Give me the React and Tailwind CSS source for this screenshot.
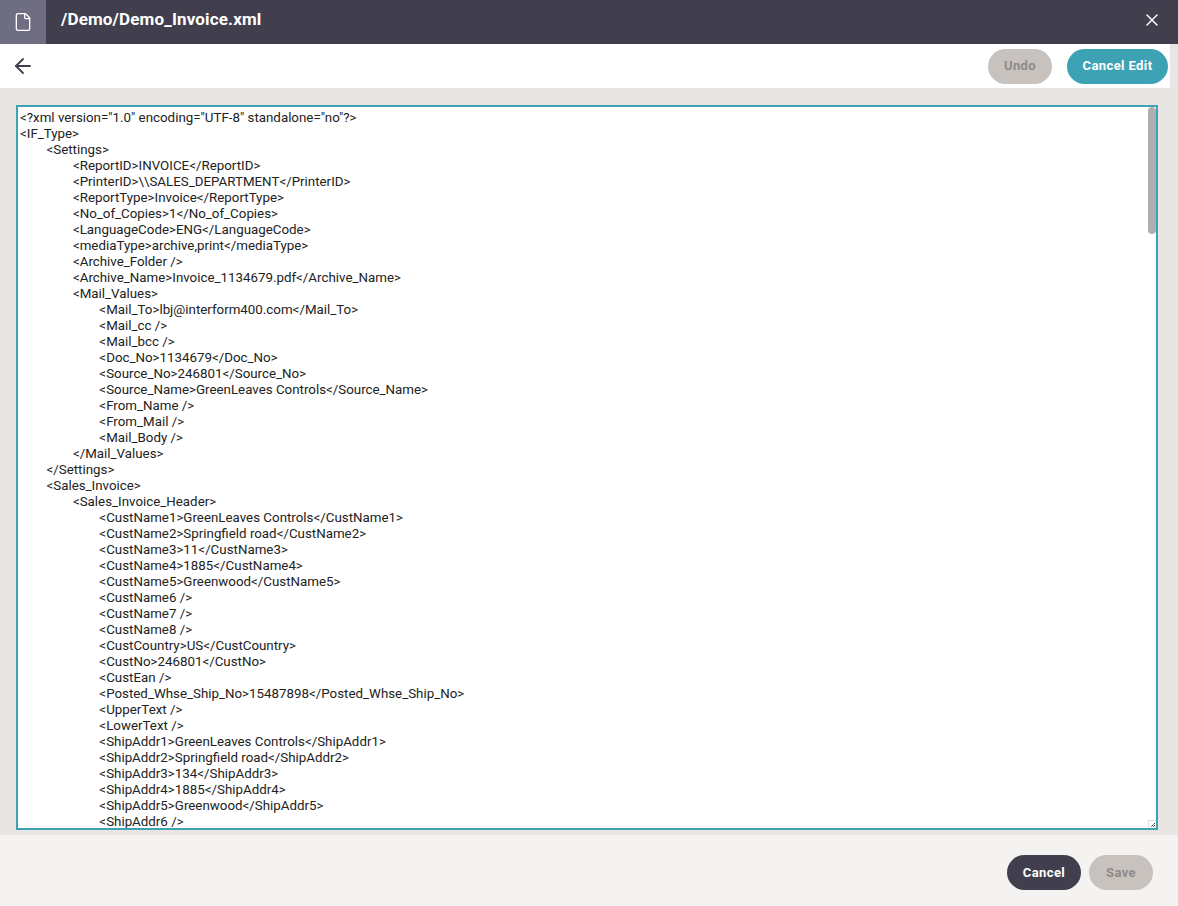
import React from "react";
import { ArrowLeft, File, X } from "lucide-react";

const head = `<?xml version="1.0" encoding="UTF-8" standalone="no"?>
<IF_Type>
	<Settings>
		<ReportID>INVOICE</ReportID>
		<PrinterID>\\\\SALES_DEPARTMENT</PrinterID>
		<ReportType>Invoice</ReportType>
		<No_of_Copies>1</No_of_Copies>
		<LanguageCode>ENG</LanguageCode>
		<mediaType>archive,print</mediaType>
		<Archive_Folder />
		<Archive_Name>Invoice_1134679.pdf</Archive_Name>
		<Mail_Values>
			<Mail_To>lbj@interform400.com</Mail_To>
			<Mail_cc />
			<Mail_bcc />
			<Doc_No>1134679</Doc_No>
			<Source_No>246801</Source_No>
			<Source_Name>GreenLeaves Controls</Source_Name>
			<From_Name />
			<From_Mail />
			<Mail_Body />
		</Mail_Values>
	</Settings>
	<Sales_Invoice>
		<Sales_Invoice_Header>
			<CustName1>GreenLeaves Controls</CustName1>
			<CustName2>Springfield road</CustName2>
			<CustName3>11</CustName3>
			<CustName4>1885</CustName4>
			<CustName5>Greenwood</CustName5>
			<CustName6 />
			<CustName7 />
			<CustName8 />
			<CustCountry>US</CustCountry>
			<CustNo>246801</CustNo>
			<CustEan />
			<Posted_Whse_Ship_No>15487898</Posted_Whse_Ship_No>
			<UpperText />
			<LowerText />
			<ShipAddr1>GreenLeaves Controls</ShipAddr1>
			<ShipAddr2>Springfield road</ShipAddr2>
			<ShipAddr3>134</ShipAddr3>
			<ShipAddr4>1885</ShipAddr4>
			<ShipAddr5>Greenwood</ShipAddr5>
			<ShipAddr6 />
			<ShipAddr7 />
			<ShipAddr8 />
		</Sales_Invoice_Header>
	</Sales_Invoice>
</IF_Type>`;

function Pill({ children, className }) {
  return (
    <button
      type="button"
      className={
        "h-[35px] rounded-[18px] text-[13px] font-bold tracking-[0.4px] flex items-center justify-center " +
        className
      }
    >
      {children}
    </button>
  );
}

export default function App() {
  return (
    <div className="w-[1178px] h-[906px] flex flex-col bg-[#e8e5e2] overflow-hidden font-['Roboto',sans-serif]">
      <header className="h-[44px] shrink-0 flex items-center bg-[#413f4e] text-white">
        <div className="w-[46px] h-full flex items-center justify-center bg-[#6f6d81]">
          <File size={20} strokeWidth={1.6} />
        </div>
        <h1 className="ml-[15px] mb-[5px] text-[17px] leading-none font-bold flex-1 tracking-[0.15px]">/Demo/Demo_Invoice.xml</h1>
        <button type="button" className="mr-[16px] mb-[5px] text-white">
          <X size={20} strokeWidth={1.8} />
        </button>
      </header>

      <div className="flex-1 min-h-0 flex flex-col pr-[8px]">
        <div className="h-[44px] shrink-0 bg-white flex items-center pl-[11px] pr-[2px]">
          <ArrowLeft size={24} strokeWidth={1.8} className="text-[#413f4e]" />
          <div className="ml-auto flex items-center gap-[15px]">
            <Pill className="w-[64px] bg-[#c8c2bf] text-[#8f8a88]">Undo</Pill>
            <Pill className="w-[101px] bg-[#3ea2b5] text-white">Cancel Edit</Pill>
          </div>
        </div>
        <div className="flex-1 min-h-0 pt-[17px] pl-[16px] pr-[12px] pb-[5px]">
          <div className="relative h-full">
            <textarea
              readOnly
              spellCheck={false}
              defaultValue={head}
              className="block w-full h-full resize-none overflow-hidden bg-white border-2 border-[#3ea2b5] px-[2px] py-[3px] text-[13.3333px] leading-[16px] [tab-size:8] text-[#222] outline-none whitespace-pre font-['Roboto',sans-serif]"
            />
            {/* custom scrollbar thumb */}
            <div className="absolute right-[2px] top-[2px] w-[8px] h-[127px] rounded-[4px] bg-[#b0aeb0]" />
            {/* resize corner */}
            <div className="absolute right-[2px] bottom-[2px] w-[8px] h-[8px] bg-white border-l border-t border-[#ddd]">
              <svg viewBox="0 0 7 7" className="absolute inset-0 w-[7px] h-[7px]">
                <rect x="5" y="2" width="1" height="1" fill="#444" />
                <rect x="4" y="3" width="1" height="1" fill="#888" />
                <rect x="3" y="4" width="1" height="1" fill="#444" />
                <rect x="5" y="4" width="1" height="1" fill="#444" />
                <rect x="2" y="5" width="1" height="1" fill="#888" />
                <rect x="4" y="5" width="1" height="1" fill="#888" />
              </svg>
            </div>
          </div>
        </div>
      </div>

      <footer className="h-[71px] shrink-0 bg-[#f4f3f1] flex items-start justify-end gap-[8px] pt-[20px] pr-[25px]">
        <Pill className="w-[74px] bg-[#413f4e] text-white">Cancel</Pill>
        <Pill className="w-[64px] bg-[#c8c2bf] text-[#8f8a88]">Save</Pill>
      </footer>
    </div>
  );
}
